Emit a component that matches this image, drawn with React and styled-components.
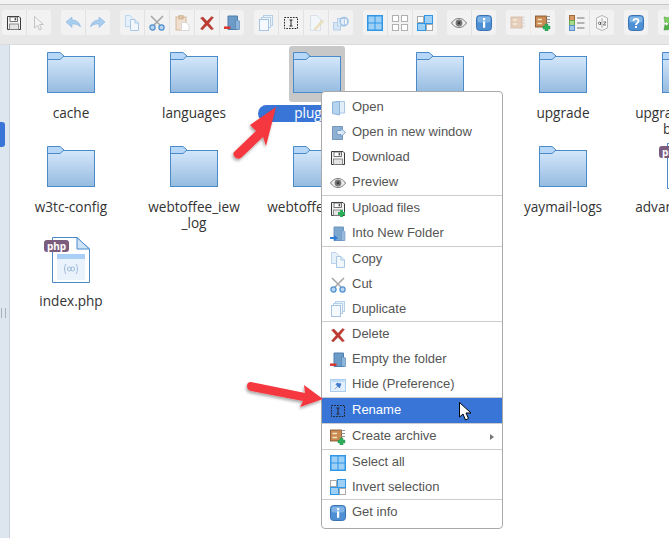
import styled, { createGlobalStyle } from "styled-components";

const GlobalStyle = createGlobalStyle`
  html, body {
    margin: 0;
    padding: 0;
    background: #fff;
  }
`;

const blue = "#4a8ac9";
const lightBlue = "#cfe3f7";

const floppy = (
  <>
    <path d="M1.5 1.5H13L14.5 3V14.5H1.5Z" fill="#f4f4f4" stroke="#3a3a3a" />
    <rect x="4" y="2" width="7.5" height="4.5" fill="#fff" stroke="#555" strokeWidth=".8" />
    <rect x="8.6" y="2.8" width="1.6" height="2.6" fill="#555" />
    <rect x="3.5" y="9" width="9" height="5.5" fill="#e4e4e4" stroke="#777" strokeWidth=".8" />
  </>
);

const glyphs = {
  save: floppy,
  pointer: <path d="M3.5 1.5V13L6.5 10.5L8.5 15L10.5 14L8.5 9.5H12.5Z" fill="#f4f4f4" stroke="#c4c4c4" />,
  undo: <path d="M1 7L7 2V5C11 5 14.5 7 15.5 12C13.5 9.5 11 9 7 9V12.5Z" fill="#a9cdee" stroke="#8ab6e0" strokeWidth=".6" />,
  redo: <path d="M15 7L9 2V5C5 5 1.5 7 .5 12C2.5 9.5 5 9 9 9V12.5Z" fill="#a9cdee" stroke="#8ab6e0" strokeWidth=".6" />,
  copy: (
    <>
      <path d="M1.5 .5H6L9 3.5V11.5H1.5Z" fill="#e6f0fa" stroke="#bcd5ec" />
      <path d="M6.5 4.5H11L14.5 8V15.5H6.5Z" fill="#f2f7fc" stroke="#a9c8e6" />
      <path d="M11 4.5V8H14.5" fill="#dfecf8" stroke="#a9c8e6" />
    </>
  ),
  cut: (
    <>
      <path d="M2 1L11 10M14 1L5 10" stroke="#a8a8a8" strokeWidth="1.6" />
      <circle cx="3.5" cy="12.5" r="2.6" fill="#b8d6f2" stroke="#4f8fce" strokeWidth="1.2" />
      <circle cx="12.5" cy="12.5" r="2.6" fill="#b8d6f2" stroke="#4f8fce" strokeWidth="1.2" />
    </>
  ),
  paste: (
    <>
      <rect x="2" y="2" width="10" height="13" fill="#f0dfcf" stroke="#d3b89c" />
      <rect x="5" y=".8" width="4" height="3" fill="#e6cdb2" stroke="#c9ab8b" />
      <path d="M7.5 7.5H12L15 10.5V15.5H7.5Z" fill="#fff" stroke="#d8d8d8" />
    </>
  ),
  del: (
    <path
      d="M1.5 3L4 2L8 6.2L12.5 1.5L14.5 2.5L9.8 8.2L14.5 14L12.3 14.8L8 10.2L3.3 15L1.5 13.8L6.2 8.2Z"
      fill="#bf3a32"
      stroke="#a8423a"
      strokeWidth=".4"
    />
  ),
  empty: (
    <>
      <path d="M4 1H13.5V14.5H4Z" fill="#6d9bc8" stroke="#4f7fae" />
      <path d="M11.5 4.5L15.5 6V14.5H11.5Z" fill="#8db4da" stroke="#4f7fae" strokeWidth=".6" />
      <rect x="0" y="11.5" width="6.5" height="2.4" fill="#d8322a" />
    </>
  ),
  duplicate: (
    <>
      <rect x="5.5" y=".5" width="9" height="10" fill="#e8f1fa" stroke="#b6d0e8" />
      <rect x="3.5" y="2.5" width="9" height="10" fill="#eef5fb" stroke="#b6d0e8" />
      <rect x="1.5" y="4.5" width="9" height="11" fill="#f5f9fd" stroke="#a4c4e2" />
    </>
  ),
  rename: (
    <>
      <rect x="1.5" y="2.5" width="13" height="11" fill="none" stroke="#222" strokeDasharray="1.6 1.2" />
      <path d="M6.5 5H9.5M8 5V11M6.5 11H9.5" stroke="#222" fill="none" />
    </>
  ),
  edit: (
    <>
      <path d="M2.5 .5H9L12.5 4V15.5H2.5Z" fill="#f3f6f9" stroke="#d8e1ea" />
      <path d="M7 13L14 5L15.5 6.5L8.5 14L6.5 14.8Z" fill="#efe3c2" stroke="#e0d0a4" strokeWidth=".6" />
    </>
  ),
  resize: (
    <>
      <rect x=".5" y="7.5" width="7" height="7.5" fill="#d6e6f6" stroke="#b5cfe8" />
      <rect x="4.5" y="3.5" width="7" height="7.5" fill="#e3eef9" stroke="#b5cfe8" />
      <circle cx="11" cy="6.5" r="4" fill="none" stroke="#9fc3e6" strokeWidth="1.6" />
    </>
  ),
  selectAll: (
    <>
      <rect x="0" y="0" width="16" height="16" fill="#2f97e8" />
      <rect x="1.5" y="1.5" width="6" height="6" fill="#9ed0f5" />
      <rect x="8.5" y="1.5" width="6" height="6" fill="#9ed0f5" />
      <rect x="1.5" y="8.5" width="6" height="6" fill="#9ed0f5" />
      <rect x="8.5" y="8.5" width="6" height="6" fill="#9ed0f5" />
    </>
  ),
  selectNone: (
    <>
      <rect x=".5" y=".5" width="6" height="6" fill="#fff" stroke="#b0b0b0" />
      <rect x="9.5" y=".5" width="6" height="6" fill="#fff" stroke="#b0b0b0" />
      <rect x=".5" y="9.5" width="6" height="6" fill="#fff" stroke="#b0b0b0" />
      <rect x="9.5" y="9.5" width="6" height="6" fill="#fff" stroke="#b0b0b0" />
    </>
  ),
  invert: (
    <>
      <rect x=".5" y="1.5" width="6" height="6" fill="#fff" stroke="#a8a8a8" />
      <rect x="7.5" y=".5" width="8" height="8" fill="#9ed0f5" stroke="#2f97e8" />
      <rect x=".5" y="8.5" width="8" height="7" fill="#9ed0f5" stroke="#2f97e8" />
      <rect x="9.5" y="9.5" width="6" height="6" fill="#fff" stroke="#a8a8a8" />
    </>
  ),
  preview: (
    <>
      <path d="M.5 8C3 4.5 5.5 3.5 8 3.5S13 4.5 15.5 8C13 11.5 10.5 12.5 8 12.5S3 11.5 .5 8Z" fill="#eee" stroke="#777" />
      <circle cx="8" cy="8" r="3.4" fill="#777" />
      <circle cx="8" cy="8" r="1.4" fill="#3c3c3c" />
    </>
  ),
  info: (
    <>
      <rect x=".5" y=".5" width="15" height="15" rx="3" fill="#4f90d4" stroke="#3a74b4" />
      <rect x="1.5" y="1.5" width="13" height="6" rx="2" fill="#7fb3e6" />
      <rect x="7" y="3" width="2.2" height="2.2" fill="#fff" />
      <rect x="7" y="6.4" width="2.2" height="6.4" fill="#fff" />
    </>
  ),
  archive: (
    <>
      <rect x="1" y="2" width="11" height="11" fill="#d49a66" stroke="#a8693a" strokeWidth=".8" />
      <path d="M3 5H7M3 9H7" stroke="#f3e3c8" strokeWidth="1.4" />
      <path d="M12 2H15M12 5H15M12 8H15M12 11H15" stroke="#aaa" />
    </>
  ),
  archiveAdd: (
    <>
      <rect x=".5" y="1" width="11" height="11" fill="#c98b52" stroke="#7d4a25" strokeWidth=".8" />
      <path d="M2.5 4.5H7M2.5 8.5H7" stroke="#f5e4c4" strokeWidth="1.4" />
      <path d="M11.5 1.5H15M11.5 4.5H15M11.5 7.5H15" stroke="#999" />
      <path d="M10 9H13V11H15V14H13V16H10V14H8V11H10Z" fill="#2fae5a" stroke="#1b8a42" strokeWidth=".4" />
    </>
  ),
  list: (
    <>
      <rect x=".5" y=".5" width="5" height="5" fill="#d59a66" stroke="#a06a3a" />
      <rect x=".5" y="5.5" width="5" height="5" fill="#a5dc8c" stroke="#6aa84f" />
      <rect x=".5" y="10.5" width="5" height="5" fill="#9cc6ee" stroke="#5a8fc4" />
      <path d="M8 3H15.5M8 8H15.5M8 13H15.5" stroke="#777" />
    </>
  ),
  sort: (
    <>
      <path d="M2.5 3L8 .5L13.5 3V13L8 15.5L2.5 13Z" fill="#f7f7f7" stroke="#b5b5b5" />
      <path d="M8 3V13" stroke="#777" strokeWidth=".6" />
      <path d="M6.5 7.5A1.2 1.2 0 1 0 6.5 9V7M6.5 7V10M9.4 7H12L9.4 10H12" fill="none" stroke="#555" strokeWidth=".8" />
    </>
  ),
  help: (
    <>
      <rect x=".5" y=".5" width="15" height="15" rx="3" fill="#4f90d4" stroke="#3a74b4" />
      <rect x="1.5" y="1.5" width="13" height="6" rx="2" fill="#7fb3e6" />
      <path d="M5.5 6C5.5 3.2 10.5 3.2 10.5 6C10.5 8 8 8 8 10" fill="none" stroke="#fff" strokeWidth="1.8" />
      <rect x="7" y="11" width="2" height="2" fill="#fff" />
    </>
  ),
  next: (
    <>
      <path d="M2 2L8 3L6.5 4.5L10 8L8 10L4.5 6.5L3 8Z" fill="#7ccf62" stroke="#4a9e38" strokeWidth=".5" />
      <path d="M2 15L3 9.5L4.5 11L8 8L10 10L6.5 13L8 14.5Z" fill="#4fb045" stroke="#2f8a2a" strokeWidth=".5" />
    </>
  ),
  open: (
    <>
      <path d="M6 1.5H14.5V13H10" fill="#e2eefa" stroke="#a9c8e6" />
      <path d="M2.5 2L9.5 1.5V15L2.5 13.5Z" fill="#b6d3ef" stroke="#8cb3d9" />
    </>
  ),
  openNew: (
    <>
      <path d="M2.5 1.5H12.5V14.5H2.5Z" fill="#8fb0d0" stroke="#7298bd" />
      <path d="M7 5.5H11V3.5L15.5 7.5L11 11.5V9.5H7Z" fill="#dceaf7" stroke="#5f8fc2" strokeWidth=".7" />
    </>
  ),
  upload: (
    <>
      {floppy}
      <path d="M10 9H13V11H15V14H13V16H10V14H8V11H10Z" fill="#2fae5a" />
    </>
  ),
  intoFolder: (
    <>
      <path d="M4 1H13.5V14.5H4Z" fill="#7ea7cf" stroke="#6c96bf" />
      <path d="M11.5 4L15 5.5V14.5H11.5Z" fill="#96bbdd" stroke="#6c96bf" strokeWidth=".6" />
      <path d="M0 11H4V9L8 12L4 15V13H0Z" fill="#2f7fd6" />
    </>
  ),
  hide: (
    <>
      <rect x=".5" y="2.5" width="15" height="12" fill="#e3f0fb" stroke="#a8cdf0" />
      <rect x="1.5" y="3" width="13" height="2" fill="#bcdcf6" />
      <path d="M5 12L11 6M6 7.5L9.5 11L11 7L7 6Z" fill="#3f78c9" stroke="#3f78c9" strokeWidth=".6" />
    </>
  ),
};

function Icon({ name }) {
  return (
    <IconSvg viewBox="0 0 16 16" width="16" height="16">
      {glyphs[name]}
    </IconSvg>
  );
}

function FolderIcon() {
  return (
    <BigSvg viewBox="0 0 48 48" width="48" height="48">
      <defs>
        <linearGradient id="folderFill" x1="0" y1="0" x2="0" y2="1">
          <stop offset="0" stopColor="#d4e7fb" />
          <stop offset="1" stopColor="#95bbe0" />
        </linearGradient>
      </defs>
      <rect x="0.5" y="6.5" width="47" height="36" fill="url(#folderFill)" stroke={blue} />
      <path d="M.5 2.5H13L17 6L13 9.5H.5Z" fill="#b6d7f7" stroke={blue} />
    </BigSvg>
  );
}

function PhpIcon() {
  return (
    <BigSvg viewBox="0 0 48 48" width="48" height="48">
      <path d="M5.5 -.5H30L42.5 11V44.5H5.5Z" fill="#fff" stroke={blue} />
      <path d="M30 -.5V11H42.5Z" fill={lightBlue} stroke={blue} />
      <rect x="10" y="16" width="28" height="26" fill="#eaf2fb" />
      <rect x="10" y="16" width="28" height="5" fill="#a9cff6" />
      <path
        d="M19 26C17 29 17 33 19 36M29 26C31 29 31 33 29 36"
        fill="none"
        stroke="#9dbbdc"
      />
      <circle cx="22.3" cy="31" r="2" fill="none" stroke="#9dbbdc" />
      <circle cx="25.7" cy="31" r="2" fill="none" stroke="#9dbbdc" />
    </BigSvg>
  );
}

const toolbar = [
  [{ i: "save" }, { i: "pointer" }],
  [{ i: "undo" }, { i: "redo" }],
  [{ i: "copy" }, { i: "cut" }, { i: "paste" }, { i: "del" }, { i: "empty" }],
  [{ i: "duplicate" }, { i: "rename" }, { i: "edit" }, { i: "resize" }],
  [{ i: "selectAll" }, { i: "selectNone" }, { i: "invert" }],
  [{ i: "preview" }, { i: "info" }],
  [{ i: "archive", faded: true }, { i: "archiveAdd" }],
  [{ i: "list" }, { i: "sort" }],
  [{ i: "help" }],
  [{ i: "next" }, { i: "next" }],
];

const files = [
  { name: "cache" },
  { name: "languages" },
  { name: "plugins", selected: true },
  { name: "themes" },
  { name: "upgrade" },
  { name: "upgrade-temps-\nbackup" },
  { name: "w3tc-config" },
  { name: "webtoffee_iew\n_log" },
  { name: "webtoffee_pack" },
  { name: "wflogs" },
  { name: "yaymail-logs" },
  { name: "advanced-a.php", php: true },
  { name: "index.php", php: true },
];

const menu = [
  [
    { icon: "open", label: "Open" },
    { icon: "openNew", label: "Open in new window" },
    { icon: "save", label: "Download" },
    { icon: "preview", label: "Preview" },
  ],
  [
    { icon: "upload", label: "Upload files" },
    { icon: "intoFolder", label: "Into New Folder" },
  ],
  [
    { icon: "copy", label: "Copy" },
    { icon: "cut", label: "Cut" },
    { icon: "duplicate", label: "Duplicate", short: true },
  ],
  [
    { icon: "del", label: "Delete" },
    { icon: "empty", label: "Empty the folder" },
    { icon: "hide", label: "Hide (Preference)" },
  ],
  [{ icon: "rename", label: "Rename", active: true }],
  [{ icon: "archiveAdd", label: "Create archive", more: true }],
  [
    { icon: "selectAll", label: "Select all" },
    { icon: "invert", label: "Invert selection", short: true },
  ],
  [{ icon: "info", label: "Get info" }],
];

export default function App() {
  return (
    <Page>
      <GlobalStyle />
      <TopStrip />
      <Toolbar>
        {toolbar.map((group, g) => (
          <ToolGroup key={g}>
            {group.map((btn, b) => (
              <ToolButton key={b} $faded={btn.faded}>
                <Icon name={btn.i} />
              </ToolButton>
            ))}
          </ToolGroup>
        ))}
      </Toolbar>
      <Body>
        <Sidebar>
          <SideTab />
          <SideGrip />
        </Sidebar>
        <Grid>
          {files.map((file) => (
            <Cell key={file.name}>
              <Tile $selected={file.selected}>
                {file.php ? <PhpIcon /> : <FolderIcon />}
                {file.php && <Badge>php</Badge>}
              </Tile>
              <Name $selected={file.selected}>{file.name}</Name>
            </Cell>
          ))}
        </Grid>
      </Body>
      <Menu>
        {menu.map((section, s) => (
          <Section key={s}>
            {section.map((item) => (
              <MenuItem key={item.label} $active={item.active} $short={item.short}>
                <Icon name={item.icon} />
                <MenuLabel>{item.label}</MenuLabel>
                {item.more && <MoreArrow />}
              </MenuItem>
            ))}
          </Section>
        ))}
      </Menu>
      <Overlay viewBox="0 0 669 538" width="669" height="538">
        <defs>
          <filter id="arrowShadow" x="-20%" y="-20%" width="140%" height="140%">
            <feDropShadow dx="-1" dy="2" stdDeviation="1.5" floodColor="#000" floodOpacity=".35" />
          </filter>
        </defs>
        <g filter="url(#arrowShadow)" fill="#f5393f">
          <path d="M276 107L250 125L256 131L234 152Q232 155 236 158Q239 160 242 157L263 137L266 146Z" />
          <path d="M323 399L304 385L305 393L251 382Q247 382 247 386Q247 390 251 391L303 401L300 407Z" />
        </g>
        <path
          d="M459.5 402.5V417L463 414L465.5 420L468.5 418.5L466 413H471Z"
          fill="#fff"
          stroke="#000"
        />
      </Overlay>
    </Page>
  );
}

const Page = styled.div`
  position: relative;
  width: 669px;
  height: 538px;
  overflow: hidden;
  background: #fff;
  display: flex;
  flex-direction: column;
`;
const TopStrip = styled.div`
  height: 4px;
  background: #f2f2f2;
  border-bottom: 1px solid #c8c8c8;
`;
const Toolbar = styled.div`
  height: 40px;
  box-sizing: border-box;
  padding: 5px 0 0 2px;
  background: #e8e8e8;
  border-bottom: 1px solid #dcdcdc;
  display: flex;
  gap: 10px;
  align-items: flex-start;
`;
const ToolGroup = styled.div`
  display: flex;
  flex-shrink: 0;
  height: 25px;
  border-radius: 3px;
  overflow: hidden;
  background: #f2f2f2;
`;
const ToolButton = styled.div`
  width: 25px;
  height: 25px;
  box-sizing: border-box;
  display: flex;
  align-items: center;
  justify-content: center;
  border-right: 1px solid #e2e2e2;
  opacity: ${(p) => (p.$faded ? 0.4 : 1)};
  &:last-child {
    width: 24px;
    border-right: none;
  }
`;
const IconSvg = styled.svg`
  display: block;
  flex-shrink: 0;
`;
const BigSvg = styled.svg`
  display: block;
  overflow: visible;
`;
const Body = styled.div`
  flex: 1;
  display: flex;
  min-height: 0;
`;
const Sidebar = styled.div`
  width: 10px;
  box-sizing: border-box;
  flex-shrink: 0;
  background: #dde5ee;
  border-right: 1px solid #c9d2dc;
  display: flex;
  flex-direction: column;
`;
const SideTab = styled.div`
  width: 5px;
  height: 25px;
  margin-top: 77px;
  background: #3875d7;
  border-radius: 0 3px 3px 0;
`;
const SideGrip = styled.div`
  width: 3px;
  height: 10px;
  margin: 161px 0 0 1px;
  border-left: 1px solid #a8b0b8;
  border-right: 1px solid #a8b0b8;
`;
const Grid = styled.div`
  display: grid;
  grid-template-columns: repeat(6, 122px);
  column-gap: 1px;
  grid-auto-rows: 94px;
  padding-top: 1px;
  flex-shrink: 0;
`;
const Cell = styled.div`
  display: flex;
  flex-direction: column;
  align-items: center;
  width: 122px;
`;
const Tile = styled.div`
  position: relative;
  width: 56px;
  height: 56px;
  box-sizing: border-box;
  padding: 4px;
  margin-bottom: 3px;
  border-radius: 3px;
  background: ${(p) => (p.$selected ? "#c8c8c8" : "transparent")};
`;
const Badge = styled.span`
  position: absolute;
  left: 1px;
  top: 6px;
  width: 25px;
  height: 12px;
  border-radius: 3px;
  background: #7b5c7c;
  color: #fff;
  font: bold 10px/12px "Open Sans", sans-serif;
  text-align: center;
`;
const Name = styled.div`
  font: 13.6px/16px "Open Sans", sans-serif;
  color: #333;
  text-align: center;
  white-space: pre;
  border-radius: 9px;
  padding: ${(p) => (p.$selected ? "0 36px 1px" : "0 0 1px")};
  background: ${(p) => (p.$selected ? "#3875d7" : "transparent")};
  ${(p) => p.$selected && "color: #fff;"}
`;
const Menu = styled.div`
  position: absolute;
  left: 321px;
  top: 91px;
  width: 182px;
  box-sizing: border-box;
  padding: 3px 0;
  background: #fff;
  border: 1px solid #aaa;
  border-radius: 4px;
  font: 13px "Liberation Sans", Arial, sans-serif;
  color: #555;
`;
const Section = styled.div`
  border-top: 1px solid #ccc;
  &:first-child {
    border-top: none;
  }
`;
const MenuItem = styled.div`
  height: ${(p) => (p.$short ? 24 : 25)}px;
  display: flex;
  align-items: center;
  gap: 6px;
  padding: 0 8px;
  background: ${(p) => (p.$active ? "#3875d7" : "transparent")};
  color: ${(p) => (p.$active ? "#fff" : "inherit")};
`;
const MenuLabel = styled.span`
  margin-bottom: 2px;
`;
const MoreArrow = styled.i`
  margin-left: auto;
  width: 0;
  height: 0;
  border-left: 4px solid #777;
  border-top: 3px solid transparent;
  border-bottom: 3px solid transparent;
`;
const Overlay = styled.svg`
  position: absolute;
  left: 0;
  top: 0;
  pointer-events: none;
`;
